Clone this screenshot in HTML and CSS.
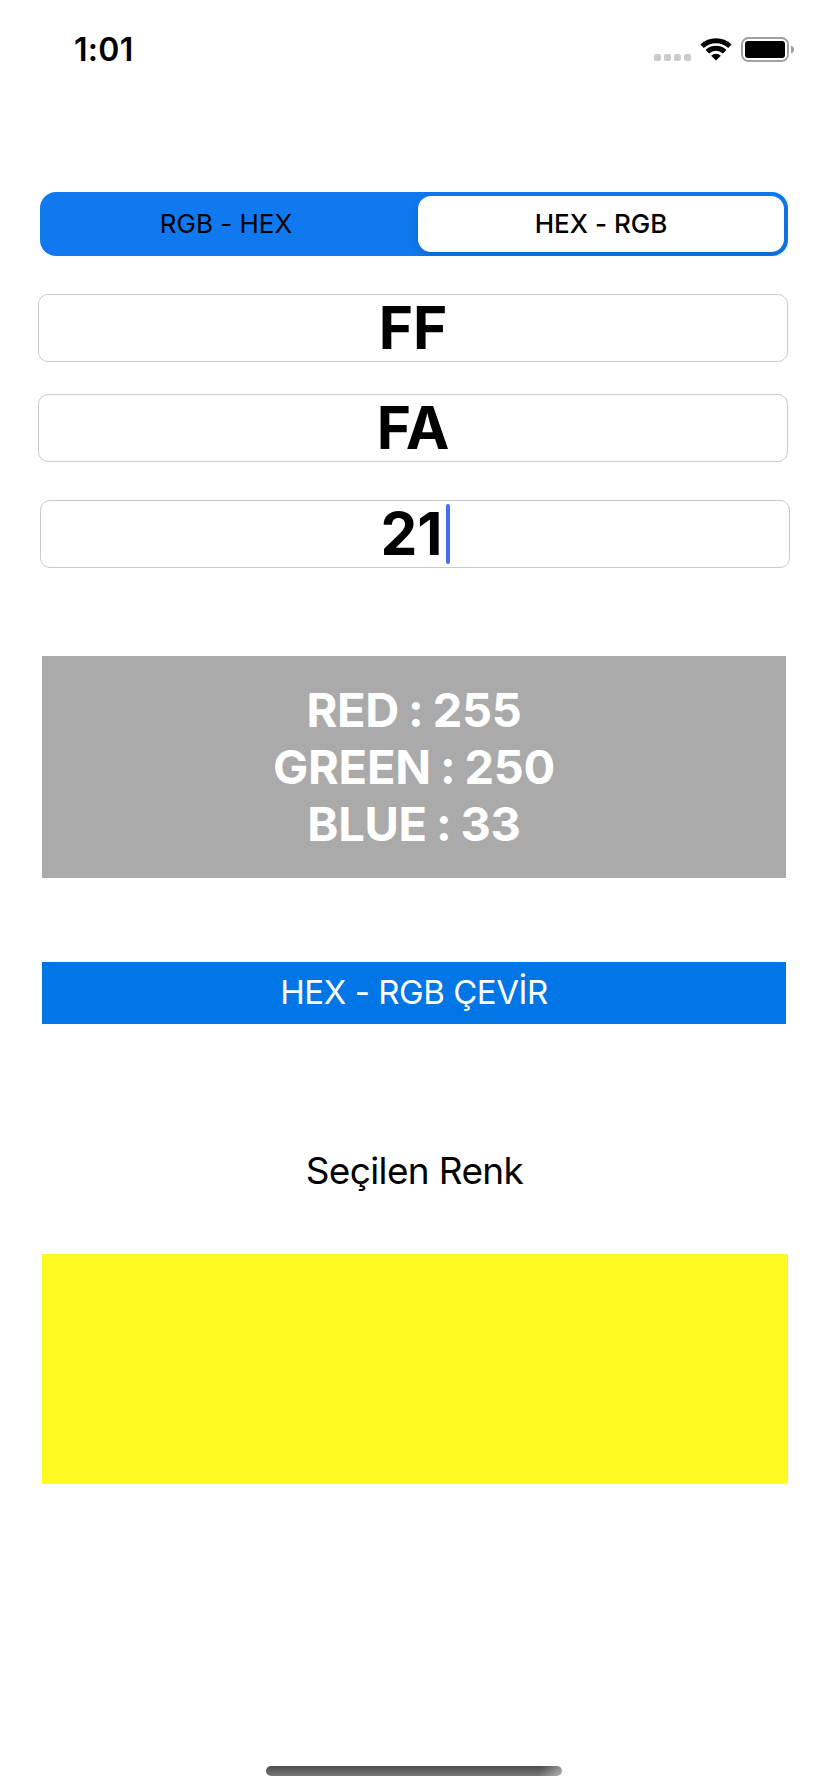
FILE: index.html
```html
<!DOCTYPE html>
<html lang="tr">
<head>
<meta charset="utf-8">
<title>HEX - RGB</title>
<link rel="stylesheet" href="styles.css">
</head>
<body>
<div class="screen">
  <header class="status">
    <span class="time">1:01</span>
    <div class="indicators">
      <div class="signal"><i></i><i></i><i></i><i></i></div>
      <svg class="wifi" width="32" height="24" viewBox="0 0 32 24">
        <path d="M0.4 7.6A22.2 22.2 0 0 1 31.6 7.6L28.2 11.1A17.5 17.5 0 0 0 3.8 11.1Z"/>
        <path d="M5.6 13A15 15 0 0 1 26.4 13L22.9 16.4A10 10 0 0 0 9.1 16.4Z"/>
        <path d="M11.2 18.7A7 7 0 0 1 20.8 18.7L16 23.6Z"/>
      </svg>
      <svg class="battery" width="54" height="26" viewBox="0 0 54 26">
        <rect x="1" y="1" width="46" height="23" rx="6.5" fill="none" stroke="#a0a0a0" stroke-width="2"/>
        <rect x="4" y="4" width="40" height="17" rx="3"/>
        <path d="M50 8.5Q53 9.5 53 12.5T50 16.5Z" fill="#a0a0a0"/>
      </svg>
    </div>
  </header>
  <div class="segmented">
    <button class="segment idle">RGB - HEX</button>
    <button class="segment selected">HEX - RGB</button>
  </div>
  <div class="field red"><span>FF</span></div>
  <div class="field green"><span>FA</span></div>
  <div class="field blue"><span>21</span><i class="caret"></i></div>
  <div class="result">
    <span>RED : 255</span>
    <span>GREEN : 250</span>
    <span>BLUE : 33</span>
  </div>
  <button class="convert">HEX - RGB ÇEVİR</button>
  <p class="caption">Seçilen Renk</p>
  <div class="swatch"></div>
  <div class="home"></div>
</div>
</body>
</html>
```
FILE: styles.css
```css
* { box-sizing: border-box; }
body { margin: 0; background: #fff; color: #000; font-family: Inter, "Liberation Sans", sans-serif; }
button { border: 0; padding: 0; font: inherit; color: inherit; background: none; }
.screen { width: 828px; height: 1792px; display: flex; flex-direction: column; background: #fff; overflow: hidden; }
.status { height: 192px; padding: 30px 33px 0 74px; display: flex; justify-content: space-between; align-items: flex-start; }
.time { font-size: 32px; line-height: 40px; font-weight: 600; letter-spacing: 0.3px; }
.indicators { display: flex; padding-top: 7px; }
.signal { display: flex; gap: 3px; padding-top: 17px; margin-right: 9px; }
.signal i { width: 7px; height: 7px; border-radius: 2px; background: #cbcbcb; }
.wifi { margin-right: 9px; }
.segmented { height: 64px; margin: 0 40px; padding: 4px; display: grid; grid-template-columns: 374px 366px; border-radius: 16px; background: #1079f0; font-feature-settings: "calt" 0; }
.segment { font-size: 26px; line-height: 56px; }
.idle { padding-right: 10px; }
.selected { background: #fff; border-radius: 13px; font-weight: 500; box-shadow: 0 5px 14px rgba(0,0,0,.14); clip-path: inset(-4px -4px -4px -30px); }
.field { height: 68px; width: 750px; margin-left: 38px; border: 1px solid #cacaca; border-radius: 10px; display: flex; justify-content: center; align-items: center; font-size: 58.5px; line-height: 66px; font-weight: 700; }
.red { margin-top: 38px; }
.green { margin-top: 32px; }
.blue { margin-top: 38px; margin-left: 40px; }
.caret { width: 4px; height: 60px; margin-left: 3px; border-radius: 2px; background: #456df0; }
.result { height: 222px; margin: 88px 42px 0; padding-top: 25px; display: flex; flex-direction: column; align-items: center; background: #aaa; color: #fff; font-size: 47px; line-height: 57px; font-weight: 650; letter-spacing: -0.25px; word-spacing: -1.8px; font-feature-settings: "calt" 0; }
.convert { height: 62px; margin: 84px 42px 0; padding-bottom: 2px; background: #0075e6; color: #fff; font-size: 33px; line-height: 60px; font-weight: 400; letter-spacing: -0.45px; font-feature-settings: "calt" 0; }
.caption { margin: 120px 0 0; height: 110px; padding-left: 1px; text-align: center; font-size: 37px; line-height: 54px; letter-spacing: -0.65px; }
.swatch { height: 230px; margin: 0 40px 0 42px; background: #fffa21; }
.home { width: 296px; height: 10px; margin: 282px 0 0 266px; border-radius: 5px; background: linear-gradient(110deg, transparent 92%, rgba(255,255,255,.45) 100%), linear-gradient(#4c4c4c, #777); }
```
